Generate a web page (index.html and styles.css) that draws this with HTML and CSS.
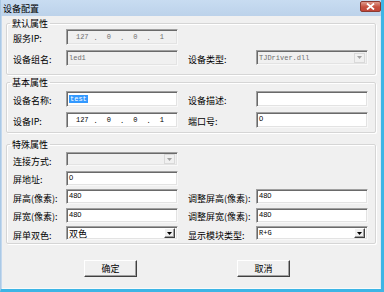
FILE: index.html
```html
<!DOCTYPE html>
<html>
<head>
    <link rel="stylesheet" href="styles.css">
</head>
<body>

<div class="window">
    <div class="titlebar">
        <span class="title">设备配置</span>
        <div class="close-btn">
            <svg width="9" height="7" viewBox="0 0 9 7"><path d="M1 0.5 L8 6.5 M8 0.5 L1 6.5" stroke="#fff" stroke-width="1.8"/></svg>
        </div>
    </div>

    <div class="client">
        <fieldset class="group group-default">
            <legend>默认属性</legend>
            <div class="grid rows-big">
                <div class="label">服务IP:</div>
                <div class="field disabled ip">
                    <span>127</span><i>.</i><span>0</span><i>.</i><span>0</span><i>.</i><span>1</span>
                </div>
                <div class="label right"></div>
                <div></div>

                <div class="label">设备组名:</div>
                <div class="field disabled mono">led1</div>
                <div class="label right">设备类型:</div>
                <div class="combo disabled">
                    <span class="mono">TJDriver.dll</span>
                    <div class="drop"><svg width="5" height="3" viewBox="0 0 5 3"><path d="M0 0 H5 L2.5 3 Z" fill="#a0a0a0"/></svg></div>
                </div>
            </div>
        </fieldset>

        <fieldset class="group group-basic">
            <legend>基本属性</legend>
            <div class="grid rows-big">
                <div class="label">设备名称:</div>
                <div class="field mono"><span class="selected">test</span></div>
                <div class="label right">设备描述:</div>
                <div class="field"></div>

                <div class="label">设备IP:</div>
                <div class="field ip">
                    <span>127</span><i>.</i><span>0</span><i>.</i><span>0</span><i>.</i><span>1</span>
                </div>
                <div class="label right">端口号:</div>
                <div class="field num">0</div>
            </div>
        </fieldset>

        <fieldset class="group group-special">
            <legend>特殊属性</legend>
            <div class="grid rows-small">
                <div class="label">连接方式:</div>
                <div class="combo disabled short">
                    <span></span>
                    <div class="drop"><svg width="5" height="3" viewBox="0 0 5 3"><path d="M0 0 H5 L2.5 3 Z" fill="#a0a0a0"/></svg></div>
                </div>
                <div></div>
                <div></div>

                <div class="label">屏地址:</div>
                <div class="field num">0</div>
                <div></div>
                <div></div>

                <div class="label">屏高(像素):</div>
                <div class="field num">480</div>
                <div class="label right">调整屏高(像素):</div>
                <div class="field num">480</div>

                <div class="label">屏宽(像素):</div>
                <div class="field num">480</div>
                <div class="label right">调整屏宽(像素):</div>
                <div class="field num">480</div>

                <div class="label">屏单双色:</div>
                <div class="combo short">
                    <span>双色</span>
                    <div class="drop raised"><svg width="5" height="3" viewBox="0 0 5 3"><path d="M0 0 H5 L2.5 3 Z" fill="#000"/></svg></div>
                </div>
                <div class="label right">显示模块类型:</div>
                <div class="combo short">
                    <span class="mono">R+G</span>
                    <div class="drop raised"><svg width="5" height="3" viewBox="0 0 5 3"><path d="M0 0 H5 L2.5 3 Z" fill="#000"/></svg></div>
                </div>
            </div>
        </fieldset>

        <div class="buttons">
            <button>确定</button>
            <button>取消</button>
        </div>
    </div>
</div>

</body>
</html>
```

FILE: styles.css
```css
body {
    margin: 0;
    padding: 0;
    background: #f0f0f0;
    font-family: "Noto Sans CJK SC", "Liberation Sans", sans-serif;
    font-size: 9px;
    color: #000;
}
.window {
    width: 384px;
    height: 292px;
    box-sizing: border-box;
    border-left: 1px solid #aac9e6;
    border-right: 3px solid #3db5e5;
    border-bottom: 3px solid #3db5e5;
    background: #c3d8ee;
    display: flex;
    flex-direction: column;
}
.titlebar {
    height: 16px;
    display: flex;
    align-items: center;
    justify-content: space-between;
    background: linear-gradient(#c8dcf1, #bcd2ea);
    padding: 0 0 0 2px;
}
.title {
    font-size: 9px;
    line-height: 11px;
}
.close-btn {
    width: 21px;
    height: 11px;
    margin-right: 0;
    margin-top: -3px;
    box-sizing: border-box;
    border: 1px solid #8b3a31;
    border-radius: 2px;
    background: linear-gradient(#e09a8c, #c6503f 55%, #c1473a);
    display: flex;
    align-items: center;
    justify-content: center;
}
.client {
    flex: 1;
    background: #f0f0f0;
    margin-left: 1px;
    border-right: 1px solid #dde9f5;
    border-bottom: 1px solid #fafafa;
    padding-top: 2px;
}
.group {
    margin: 0 4px;
    border: 1px solid #d5d5d5;
    border-radius: 2px;
    box-shadow: inset 1px 1px #fff, 1px 1px #fff;
    padding: 0 7px 0 6px;
}
.group legend {
    padding: 0 2px;
    margin-left: -3px;
    line-height: 11px;
}
.group-default {
    padding-bottom: 8px;
}
.group-basic {
    margin-top: 2px;
    padding-top: 3px;
    padding-bottom: 4px;
}
.group-special {
    margin-top: 6px;
    padding-top: 2px;
    padding-bottom: 2px;
}
.grid {
    display: grid;
    grid-template-columns: 53px 112px 78px 112px;
}
.rows-big {
    grid-auto-rows: 16px;
    row-gap: 5px;
}
.rows-small {
    grid-auto-rows: 15px;
    row-gap: 3.5px;
}
.label {
    display: flex;
    align-items: center;
    padding-top: 3px;
    white-space: nowrap;
}
.label.right {
    padding-left: 10px;
}
.field {
    box-sizing: border-box;
    border: 1px solid;
    border-color: #a0a0a0 #f8f8f8 #f8f8f8 #a0a0a0;
    box-shadow: inset 1px 1px #6a6a6a, inset -1px -1px #e3e3e3;
    background: #fff;
    padding: 2px 2px 0 2px;
    overflow: hidden;
    white-space: nowrap;
}
.field.disabled {
    background: #f0f0f0;
    color: #6d6d6d;
}
.mono {
    font-family: "Liberation Mono", monospace;
    font-size: 7px;
    line-height: 10px;
}
.num {
    font-family: "Liberation Sans", sans-serif;
    font-size: 7.5px;
    line-height: 9px;
    padding-top: 1px;
}
.selected {
    background: #3399ff;
    color: #fff;
    padding: 0 1px;
}
.ip {
    display: flex;
    align-items: center;
    padding: 0 2px;
    font-family: "Liberation Mono", monospace;
    font-size: 7px;
}
.ip span {
    flex: 1;
    text-align: center;
}
.ip i {
    font-style: normal;
    width: 0;
    display: flex;
    justify-content: center;
    padding-top: 2px;
}
.combo {
    box-sizing: border-box;
    height: 15px;
    border: 1px solid;
    border-color: #a0a0a0 #f8f8f8 #f8f8f8 #a0a0a0;
    box-shadow: inset 1px 1px #6a6a6a, inset -1px -1px #e3e3e3;
    background: #fff;
    display: flex;
    align-items: center;
    justify-content: space-between;
    padding: 0 2px 0 2px;
}
.combo.short {
    height: 14px;
}
.combo.disabled {
    background: #f0f0f0;
    color: #6d6d6d;
}
.drop {
    width: 11px;
    height: 10px;
    box-sizing: border-box;
    border: 1px solid #d9d9d9;
    background: #f0f0f0;
    display: flex;
    align-items: center;
    justify-content: center;
}
.drop.raised {
    border-color: #fff #404040 #404040 #fff;
    box-shadow: inset -1px -1px #a0a0a0;
}
.buttons {
    display: flex;
    gap: 100px;
    margin-top: 16px;
    padding-left: 82px;
}
button {
    width: 53px;
    height: 17px;
    box-sizing: border-box;
    background: #f0f0f0;
    border: 1px solid;
    border-color: #fff #404040 #404040 #fff;
    box-shadow: inset -1px -1px #a0a0a0;
    font-family: "Noto Sans CJK SC", sans-serif;
    font-size: 9px;
    padding: 0;
    line-height: 13px;
}
```
